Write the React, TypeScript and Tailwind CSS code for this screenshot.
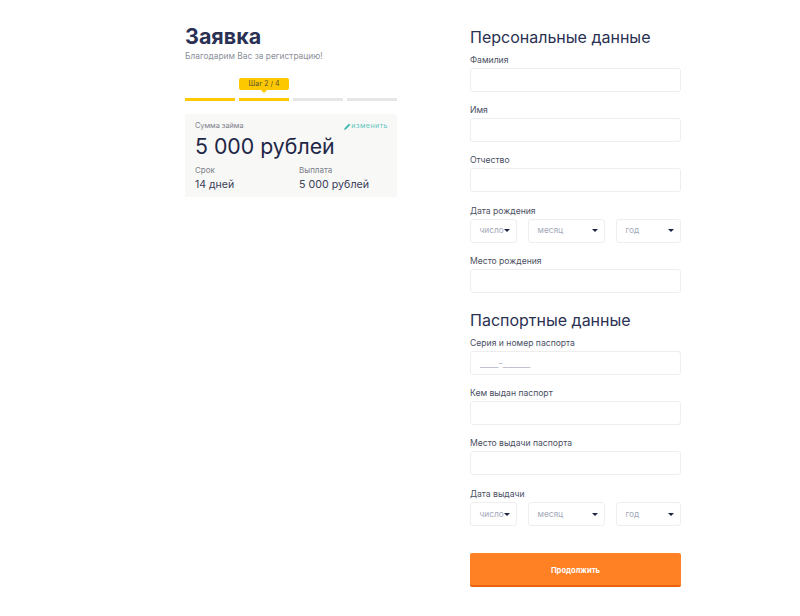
const font = { fontFamily: 'Inter, "Noto Sans", sans-serif' };

const Label = ({ children }: { children: string }) => (
  <div className="h-[11px] text-[8.6px] leading-[11px] text-[#4a4f63]">{children}</div>
);

const Input = ({ placeholder }: { placeholder?: string }) => (
  <div className="mt-[2px] h-[24px] w-[211px] rounded-[3px] border border-[#eeeeee] bg-white pl-[9px] text-[10px] leading-[22px] text-[#b5b9c4]">
    {placeholder}
  </div>
);

const Select = ({ text, width }: { text: string; width: string }) => (
  <div className={`${width} flex h-[24px] items-center justify-between rounded-[3px] border border-[#eeeeee] bg-white pl-[8.5px] pr-[3px] text-[8.3px] text-[#a3a8b8]`}>
    <span>{text}</span>
    <span className="mr-[3px] h-0 w-0 border-x-[3px] border-t-[3px] border-x-transparent border-t-[#1d2440]" />
  </div>
);

const DateRow = () => (
  <div className="mt-[2px] flex w-[211px] justify-between">
    <Select text="число" width="w-[47px]" />
    <Select text="месяц" width="w-[77px]" />
    <Select text="год" width="w-[65px]" />
  </div>
);

const Field = ({ label, placeholder }: { label: string; placeholder?: string }) => (
  <div className="mb-[13.2px]">
    <Label>{label}</Label>
    <Input placeholder={placeholder} />
  </div>
);

export default function App() {
  return (
    <div style={font} className="flex h-[616px] w-[800px] overflow-hidden bg-white text-[#2a3153]">
      <div className="ml-[185px] w-[212px] pt-[22px]">
        <h1 className="text-[21.5px] font-bold leading-[28px] text-[#2a3153]">Заявка</h1>
        <p className="text-[8.4px] leading-[12px] text-[#8c8f9a]">Благодарим Вас за регистрацию!</p>
        <div className="relative mt-[36px] flex justify-between">
          <div className="h-[3px] w-[50px] bg-[#fdc800]" />
          <div className="h-[3px] w-[50px] bg-[#fdc800]" />
          <div className="h-[3px] w-[50px] bg-[#e6e6e6]" />
          <div className="h-[3px] w-[50px] bg-[#e6e6e6]" />
          <div className="absolute -top-[20px] left-[54px] flex h-[12px] w-[50px] items-center justify-center rounded-[2px] bg-[#fdc800] text-[7px] text-[#5b5230]">
            Шаг 2 / 4
            <span className="absolute -bottom-[3px] left-[22px] h-0 w-0 border-x-[3px] border-t-[3px] border-x-transparent border-t-[#fdc800]" />
          </div>
        </div>
        <div className="mt-[13px] h-[83px] rounded-[2px] bg-[#f8f8f6] pl-[10px] pr-[9px] pt-[7px]">
          <div className="flex items-center justify-between">
            <span className="text-[7.3px] leading-[10px] text-[#7c7f8a]">Сумма займа</span>
            <span className="flex items-center text-[7px] leading-[10px] tracking-[0.5px] text-[#5cc6c0]">
              <svg viewBox="0 0 10 10" className="h-[7px] w-[7px]" fill="#3db8b0">
                <path d="M0 10 L1 7 L7 1 L9 3 L3 9 Z" />
              </svg>
              изменить
            </span>
          </div>
          <div className="mt-[2px] text-[21.3px] leading-[26px] text-[#1f2747]">5 000 рублей</div>
          <div className="mt-[6px] flex">
            <div className="w-[104px]">
              <div className="text-[8px] leading-[11px] text-[#7c7f8a]">Срок</div>
              <div className="mt-[2px] text-[10.5px] leading-[14px] text-[#3a405a]">14 дней</div>
            </div>
            <div>
              <div className="text-[8px] leading-[11px] text-[#7c7f8a]">Выплата</div>
              <div className="mt-[2px] text-[10.7px] leading-[14px] text-[#3a405a]">5 000 рублей</div>
            </div>
          </div>
        </div>
      </div>
      <div className="ml-[73px] w-[211px] pt-[27px]">
        <h2 className="text-[16px] leading-[20px] text-[#2a3153]">Персональные данные</h2>
        <div className="mt-[8px]">
          <Field label="Фамилия" />
          <Field label="Имя" />
          <Field label="Отчество" />
          <div className="mb-[13.2px]">
            <Label>Дата рождения</Label>
            <DateRow />
          </div>
          <Field label="Место рождения" />
        </div>
        <h2 className="mt-[17px] text-[16px] leading-[20px] text-[#2a3153]">Паспортные данные</h2>
        <div className="mt-[8px]">
          <Field label="Серия и номер паспорта" placeholder="____-______" />
          <Field label="Кем выдан паспорт" />
          <Field label="Место выдачи паспорта" />
          <div className="pt-[1px]">
            <Label>Дата выдачи</Label>
            <DateRow />
          </div>
        </div>
        <button className="mt-[27px] h-[34px] w-[211px] rounded-[2px] border-b-2 border-[#e8620c] bg-[#ff8124] pt-[3px] text-[7.6px] font-bold text-white">
          Продолжить
        </button>
      </div>
    </div>
  );
}
